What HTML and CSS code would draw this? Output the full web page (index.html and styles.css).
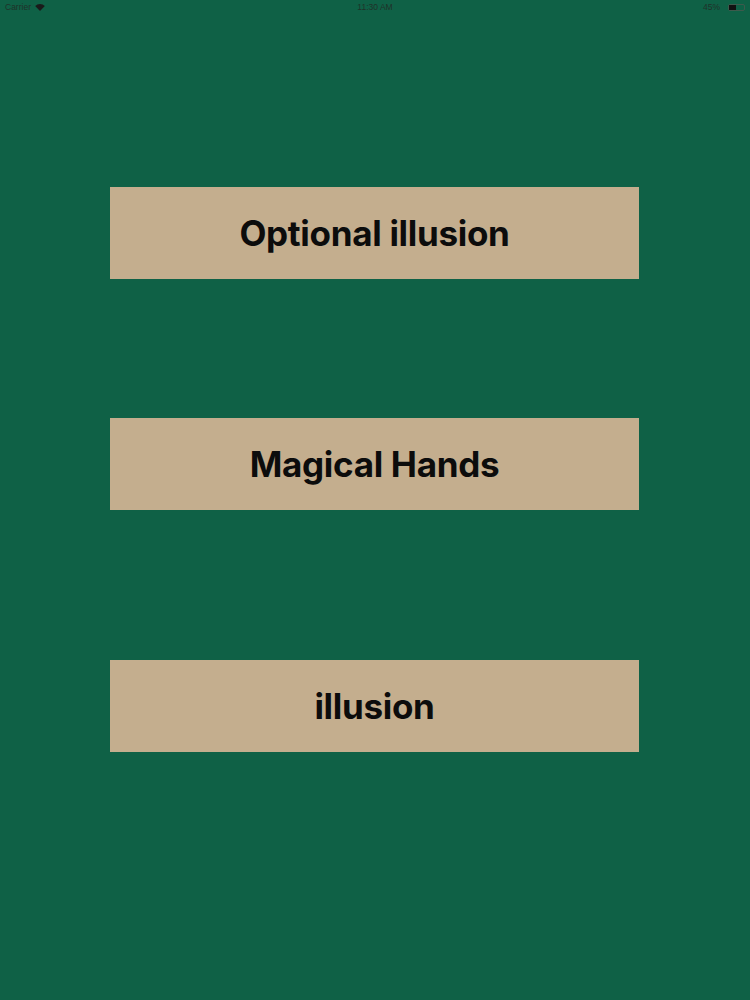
FILE: index.html
```html
<!DOCTYPE html>
<html>
<head>
<meta charset="utf-8">
<link rel="stylesheet" href="styles.css">
</head>
<body>
<div class="screen">
  <div class="status">
    <div class="status-left">
      <span class="carrier">Carrier</span>
      <svg class="wifi" width="10" height="7" viewBox="0 0 11 8"><path d="M5.5 8 L0 2.2 A8 8 0 0 1 11 2.2 Z" fill="#1a1a1a"/></svg>
    </div>
    <div class="status-center">11:30 AM</div>
    <div class="status-right">
      <span>45%</span>
      <span class="battery"><span class="battery-fill"></span></span>
    </div>
  </div>
  <div class="buttons">
    <button class="btn b1">Optional illusion</button>
    <button class="btn b2">Magical Hands</button>
    <button class="btn b3">illusion</button>
  </div>
</div>
</body>
</html>
```
FILE: styles.css
```css
html, body {
  margin: 0;
  padding: 0;
}
body {
  background: #0f6146;
  font-family: Inter, "Liberation Sans", sans-serif;
}
.screen {
  width: 750px;
  height: 1000px;
  background: #0f6146;
}
.status {
  height: 14px;
  display: flex;
  align-items: center;
  justify-content: space-between;
  padding: 0 5px;
  font-family: "Liberation Sans", sans-serif;
  font-size: 8.5px;
  color: #1f3129;
  position: relative;
}
.status-left {
  display: flex;
  align-items: center;
  gap: 4px;
}
.wifi {
  display: block;
}
.status-center {
  position: absolute;
  left: 0;
  right: 0;
  text-align: center;
  pointer-events: none;
}
.status-right {
  display: flex;
  align-items: center;
  gap: 8px;
}
.battery {
  width: 15px;
  height: 5px;
  border: 1px solid #3d5a4c;
  border-radius: 2px;
  display: flex;
}
.battery-fill {
  width: 7px;
  height: 100%;
  background: #111;
}
.buttons {
  display: flex;
  flex-direction: column;
  align-items: center;
  padding-top: 173px;
}
.btn {
  width: 529px;
  height: 92px;
  margin-left: -1px;
  background: #c4ae8e;
  border: none;
  border-radius: 0;
  font-family: Inter, "Liberation Sans", sans-serif;
  font-weight: 700;
  font-size: 35px;
  letter-spacing: -0.3px;
  color: #0c0c0c;
  padding: 0;
}
.b2 {
  margin-top: 139px;
}
.b3 {
  margin-top: 150px;
}
```
